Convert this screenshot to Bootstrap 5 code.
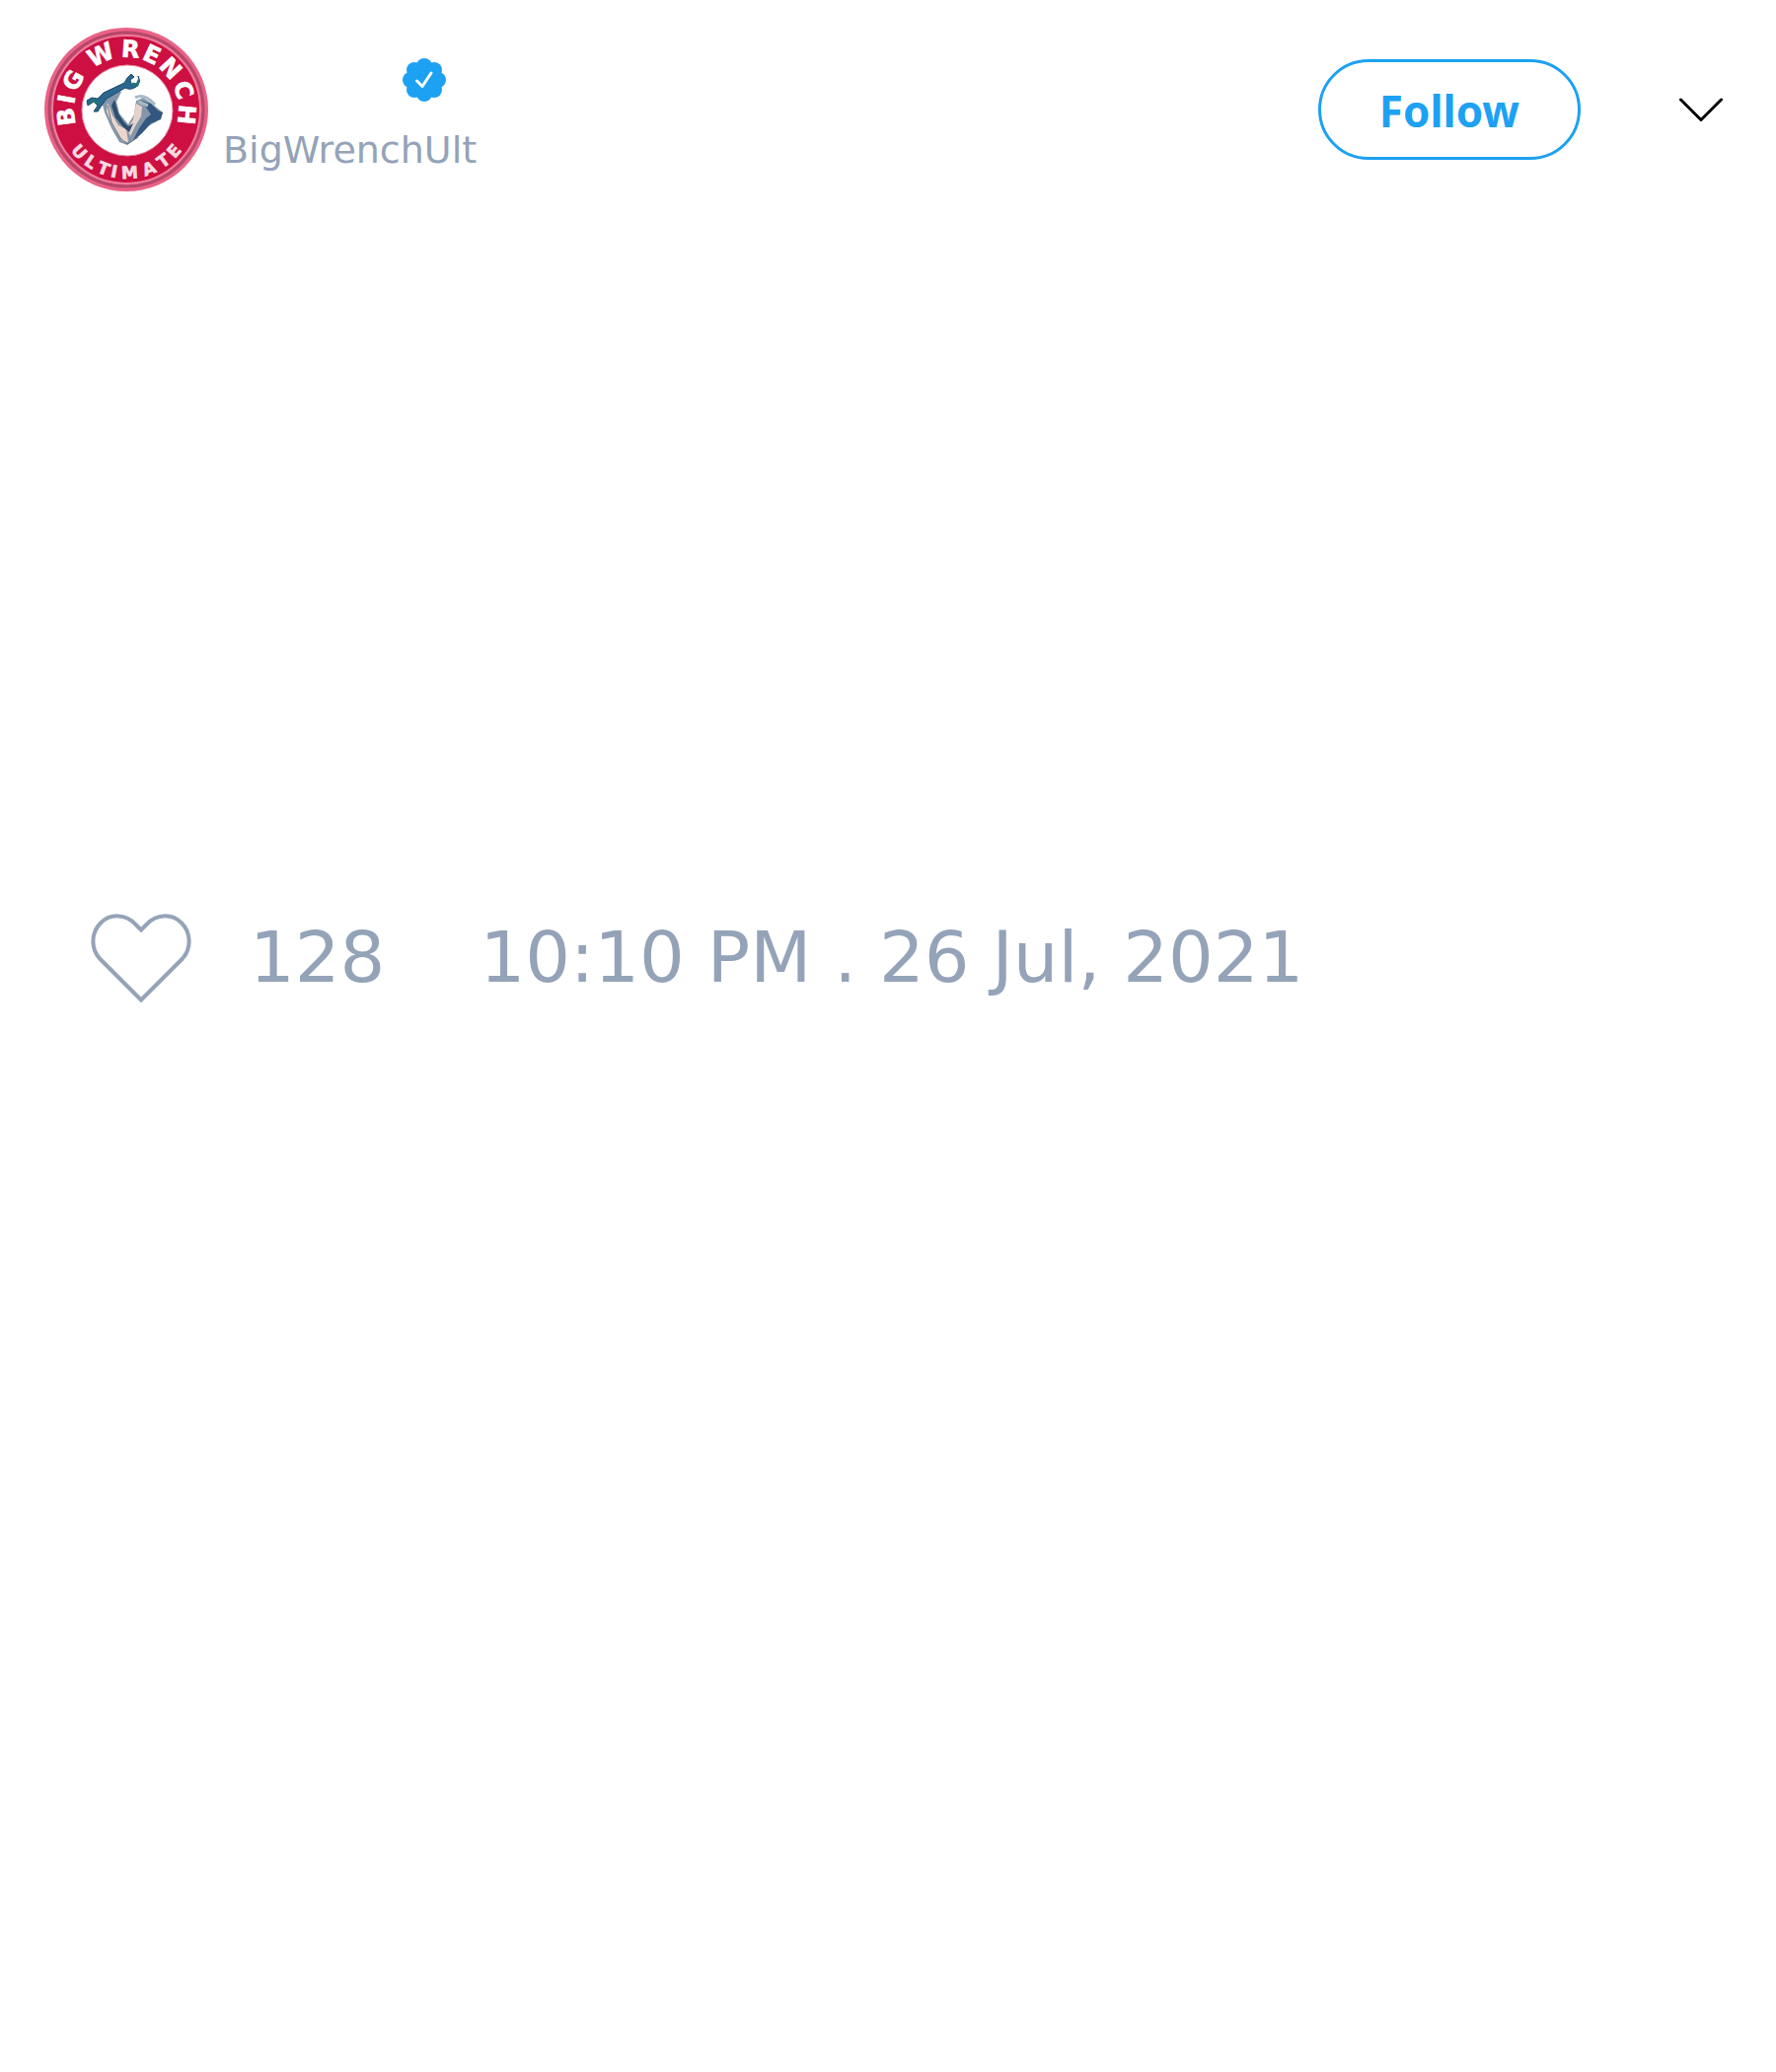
<!DOCTYPE html>
<html lang="en">
<head>
<meta charset="utf-8">
<meta name="viewport" content="width=device-width, initial-scale=1">
<title>BigWrenchUlt</title>
<link rel="stylesheet" href="https://cdn.jsdelivr.net/npm/bootstrap@5.3.0/dist/css/bootstrap.min.css">
<style>
  :root { --tweet-blue: #1da1f2; --tweet-grey: #94a3b8; }
  body { background: #fff; font-family: "DejaVu Sans", sans-serif; }
  svg { display: block; flex: none; }
  .tweet-head { padding: 28px 54px 0 45px; gap: 15px; }
  .tweet-id { padding-top: 31px; }
  .tweet-name { padding-left: 182px; margin-bottom: 25px; }
  .tweet-handle { color: var(--tweet-grey); font-size: 38px; line-height: 48px; }
  .tweet-actions { gap: 100px; padding-top: 32px; }
  .btn-follow { --bs-btn-color: var(--tweet-blue); --bs-btn-border-color: var(--tweet-blue);
    --bs-btn-hover-color: #fff; --bs-btn-hover-bg: var(--tweet-blue);
    border-width: 3px; padding: 19px 59px 17px; font-family: "Noto Sans", sans-serif; font-size: 44px; line-height: 60px; font-weight: 700; }
  .tweet-body { min-height: 730px; }
  .tweet-meta { padding: 0 92px; color: var(--tweet-grey); font-size: 72px; line-height: 84px; }
  .tweet-like { gap: 59px; color: inherit; }
  .tweet-time { margin-left: 96px; }
  .crest { font-weight: 700; fill: #fff; stroke: #fff; stroke-width: .6; text-anchor: middle; }
</style>
</head>
<body>
<main>
  <article>
    <header class="tweet-head d-flex align-items-start">
      <svg width="166" height="166" viewBox="-83 -83 166 166" role="img" aria-label="Big Wrench Ultimate">
        <circle r="83" fill="#ea6286"/>
        <circle r="78" fill="none" stroke="#b4476a" stroke-width="3"/>
        <circle r="76" fill="#cd0f42"/>
        <circle r="75" fill="none" stroke="#ec7f9d" stroke-width="2"/>
        <circle cx="1" cy="1" r="46" fill="#fefefe" stroke="#e78aa3" stroke-width="1"/>
        <g class="crest" font-size="24">
          <text y="-53" transform="rotate(-97)">B</text>
          <text y="-53" transform="rotate(-80)">I</text>
          <text y="-53" transform="rotate(-61)">G</text>
          <text y="-53" transform="rotate(-25)">W</text>
          <text y="-53" transform="rotate(4)">R</text>
          <text y="-53" transform="rotate(25)">E</text>
          <text y="-53" transform="rotate(47)">N</text>
          <text y="-53" transform="rotate(71)">C</text>
          <text y="-53" transform="rotate(95)">H</text>
        </g>
        <g class="crest" font-size="17" opacity=".85">
          <text y="70" transform="rotate(48)">U</text>
          <text y="70" transform="rotate(34)">L</text>
          <text y="70" transform="rotate(21)">T</text>
          <text y="70" transform="rotate(11)">I</text>
          <text y="70" transform="rotate(-3)">M</text>
          <text y="70" transform="rotate(-21)">A</text>
          <text y="70" transform="rotate(-36)">T</text>
          <text y="70" transform="rotate(-49)">E</text>
        </g>
        <!-- two arms flexed into a V, holding a wrench -->
        <path d="M-20-18-12-22-5-18-10-8-7 4 2 15 8 5 10-9 17-12 26-6 37 3 31 12 22 17 11 29 1 36-7 33-15 19-22 3-25-9Z" fill="#8497aa"/>
        <path d="M-19-7-14 6-8 16 0 20 2 33-4 32-13 18-20 2Z" fill="#ecd6cb"/>
        <path d="M10-6 16-3 15 7 9 17 4 27 1 20 7 10Z" fill="#e6d2ca"/>
        <path d="M-12-10-8 4-3 12 2 17 7 14 3 23-3 18-11 8-15-4Z" fill="#2c4d70"/>
        <path d="M15-9 25-6 32 1 37 3 35 10 25 14 16 24 7 31 13 19 20 9 25 5 19-4Z" fill="#33577e"/>
        <path d="M9-12Q18-17 29-5M12-8 22-4" fill="none" stroke="#a9b9c4" stroke-width="3"/>
        <path d="M-23-17-2-27 1-32 5-36 8-33 4-30 5-26 10-25 13-30 12-34Q15-27 10-23 4-19-1-22L-20-11-23-7-29 2-33 2-29-4-33-8-39-4-40-9-35-12-29-11Z" fill="#2b668d" stroke="#1c4b6d" stroke-width="1"/>
        <path d="M-37-8-31-9-27-5M6-26 11-25 13-30" fill="none" stroke="#23747a" stroke-width="3"/>
        <path d="M-19-4-15 13-6 29 1 35 12 28" fill="none" stroke="#667788" stroke-width="1"/>
      </svg>
      <div class="tweet-id">
        <div class="tweet-name">
          <svg width="44" height="44" viewBox="-22 -22 44 44" role="img" aria-label="Verified">
            <g fill="#1da1f2">
              <circle r="17"/>
              <circle cy="-14" r="8"/><circle cy="14" r="8"/><circle cx="-14" r="8"/><circle cx="14" r="8"/>
              <circle cx="-10" cy="-10" r="8"/><circle cx="10" cy="-10" r="8"/><circle cx="-10" cy="10" r="8"/><circle cx="10" cy="10" r="8"/>
            </g>
            <path d="M-7.500 1-2 6.500 7-7" fill="none" stroke="#fff" stroke-width="3" stroke-linecap="round" stroke-linejoin="round"/>
          </svg>
        </div>
        <div class="tweet-handle">BigWrenchUlt</div>
      </div>
      <div class="tweet-actions d-flex align-items-center ms-auto">
        <button type="button" class="btn btn-follow rounded-pill">Follow</button>
        <button type="button" class="btn p-0 border-0" aria-label="More options">
          <svg width="44" height="24" viewBox="0 0 44 24"><path d="M1.500 2 22 22.500 42.500 2" fill="none" stroke="#000" stroke-width="3" stroke-linecap="round" stroke-linejoin="round"/></svg>
        </button>
      </div>
    </header>
    <div class="tweet-body"></div>
    <footer class="tweet-meta d-flex align-items-center">
      <div class="tweet-like d-flex align-items-center">
        <button type="button" class="btn p-0 border-0" aria-label="Like">
          <svg width="102" height="92" viewBox="0 -1 102 92"><path d="M51 17.500 45 11.500A24.500 25.500 0 0 0 9 46.500L51 88.500 93 46.500A24.500 25.500 0 0 0 57 11.500Z" fill="none" stroke="#94a3b8" stroke-width="4"/></svg>
        </button>
        <span>128</span>
      </div>
      <time class="tweet-time" datetime="2021-07-26T22:10">10:10 PM . 26 Jul, 2021</time>
    </footer>
  </article>
</main>
<script src="https://cdn.jsdelivr.net/npm/bootstrap@5.3.0/dist/js/bootstrap.bundle.min.js"></script>
</body>
</html>
